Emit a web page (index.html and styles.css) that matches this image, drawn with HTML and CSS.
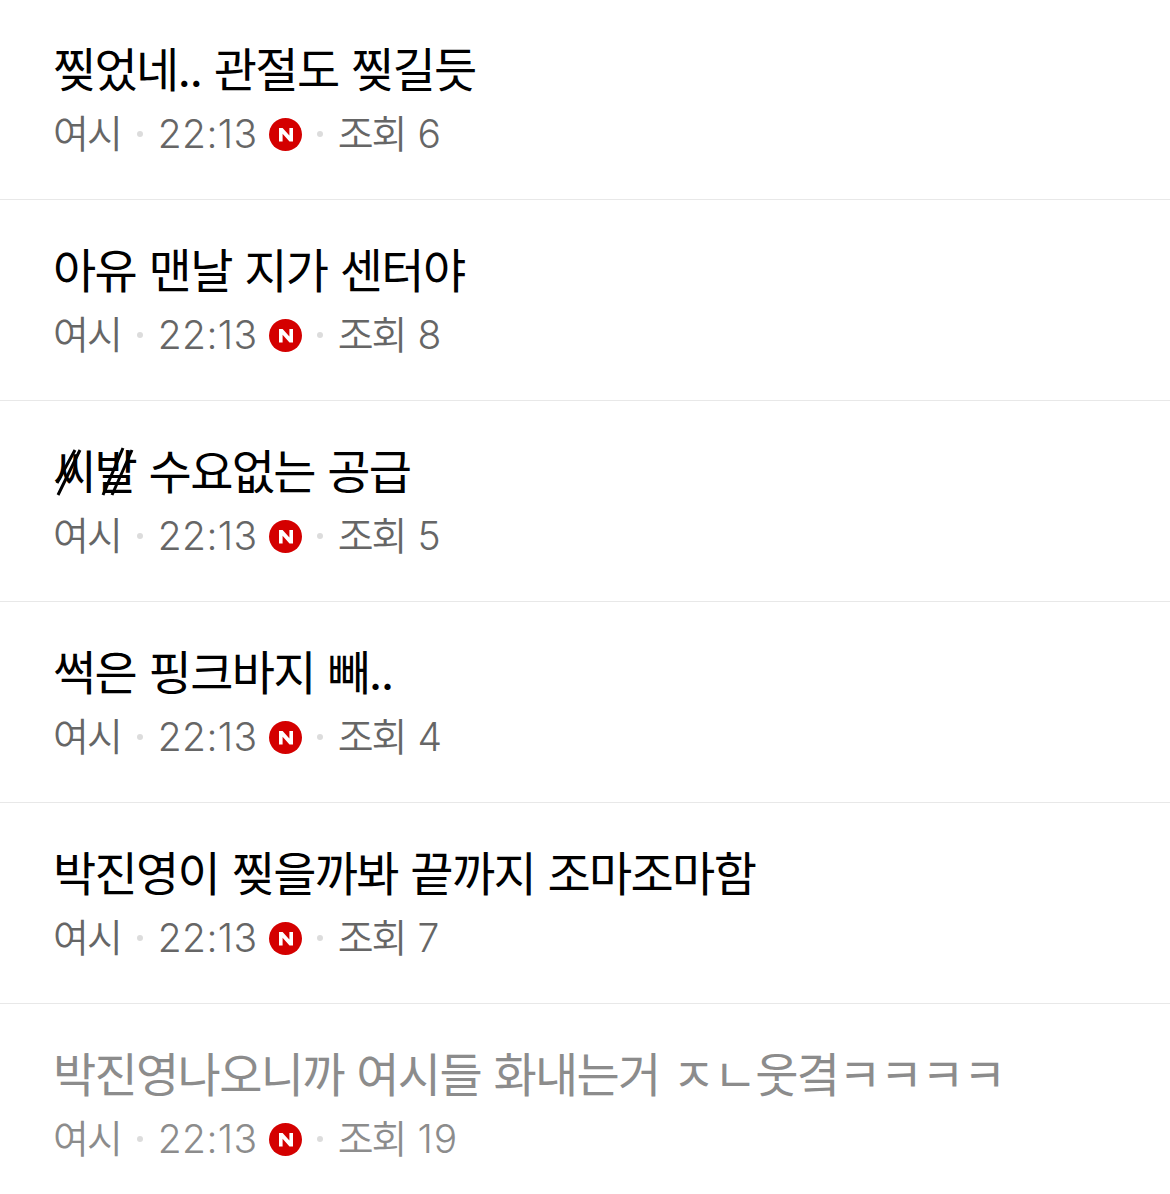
FILE: index.html
```html
<!DOCTYPE html>
<html lang="ko">
<head>
<meta charset="utf-8">
<title>목록</title>
<link rel="stylesheet" href="styles.css">
</head>
<body>
<ul class="list">
  <li class="row"><div class="title">찢었네.. 관절도 찢길듯</div><div class="meta"><span class="ko">여시</span><i class="dot"></i><span class="time">22:13</span><svg class="new" viewBox="0 0 33 33"><circle cx="16.5" cy="16.5" r="16.5" fill="#d40000"/><path d="M10 10h3.6l6.8 7.6V10H24v13.5h-3.5l-6.9-7.7v7.7H10z" fill="#fff"/></svg><i class="dot dot-after"></i><span class="views"><span class="ko">조회</span> 6</span></div></li>
  <li class="row"><div class="title">아유 맨날 지가 센터야</div><div class="meta"><span class="ko">여시</span><i class="dot"></i><span class="time">22:13</span><svg class="new" viewBox="0 0 33 33"><circle cx="16.5" cy="16.5" r="16.5" fill="#d40000"/><path d="M10 10h3.6l6.8 7.6V10H24v13.5h-3.5l-6.9-7.7v7.7H10z" fill="#fff"/></svg><i class="dot dot-after"></i><span class="views"><span class="ko">조회</span> 8</span></div></li>
  <li class="row"><div class="title"><span class="struck">씨발<svg class="slashes" viewBox="0 0 90 60"><path d="M4 43L22 10M5 55L27 10M50 55L70 8M59 55L79 10" fill="none" stroke="#000" stroke-width="3"/></svg></span> 수요없는 공급</div><div class="meta"><span class="ko">여시</span><i class="dot"></i><span class="time">22:13</span><svg class="new" viewBox="0 0 33 33"><circle cx="16.5" cy="16.5" r="16.5" fill="#d40000"/><path d="M10 10h3.6l6.8 7.6V10H24v13.5h-3.5l-6.9-7.7v7.7H10z" fill="#fff"/></svg><i class="dot dot-after"></i><span class="views"><span class="ko">조회</span> 5</span></div></li>
  <li class="row"><div class="title">썩은 핑크바지 빼..</div><div class="meta"><span class="ko">여시</span><i class="dot"></i><span class="time">22:13</span><svg class="new" viewBox="0 0 33 33"><circle cx="16.5" cy="16.5" r="16.5" fill="#d40000"/><path d="M10 10h3.6l6.8 7.6V10H24v13.5h-3.5l-6.9-7.7v7.7H10z" fill="#fff"/></svg><i class="dot dot-after"></i><span class="views"><span class="ko">조회</span> 4</span></div></li>
  <li class="row"><div class="title">박진영이 찢을까봐 끝까지 조마조마함</div><div class="meta"><span class="ko">여시</span><i class="dot"></i><span class="time">22:13</span><svg class="new" viewBox="0 0 33 33"><circle cx="16.5" cy="16.5" r="16.5" fill="#d40000"/><path d="M10 10h3.6l6.8 7.6V10H24v13.5h-3.5l-6.9-7.7v7.7H10z" fill="#fff"/></svg><i class="dot dot-after"></i><span class="views"><span class="ko">조회</span> 7</span></div></li>
  <li class="row read"><div class="title">박진영나오니까 여시들 화내는거 ㅈㄴ웃곀ㅋㅋㅋㅋ</div><div class="meta"><span class="ko">여시</span><i class="dot"></i><span class="time">22:13</span><svg class="new" viewBox="0 0 33 33"><circle cx="16.5" cy="16.5" r="16.5" fill="#d40000"/><path d="M10 10h3.6l6.8 7.6V10H24v13.5h-3.5l-6.9-7.7v7.7H10z" fill="#fff"/></svg><i class="dot dot-after"></i><span class="views"><span class="ko">조회</span> 19</span></div></li>
</ul>
</body>
</html>
```
FILE: styles.css
```css
* { box-sizing: border-box; }
html, body { margin: 0; padding: 0; background: #fff; }
body { font-family: Inter, "Noto Sans CJK KR", sans-serif; }
.list { list-style: none; margin: 0; padding: 0; }
.row { height: 201px; padding: 39px 53px 0; border-bottom: 1px solid #e8e8e8; }
.row:first-child { height: 200px; padding-top: 38px; }
.row:last-child { border-bottom: 0; }
.title { font-size: 47px; line-height: 64px; letter-spacing: -1.7px; word-spacing: 1px; color: #000; white-space: nowrap; }
.read .title { color: #8c8c8c; }
.struck { position: relative; display: inline-block; }
.slashes { position: absolute; left: 0; top: 0; width: 90px; height: 60px; }
.meta { display: flex; align-items: baseline; height: 62px; margin-top: 1px; font-size: 39px; line-height: 62px; font-weight: 350; color: #666; white-space: nowrap; }
.read .meta { color: #8c8c8c; }
.ko { letter-spacing: -2px; }
.time { letter-spacing: 0.4px; }
.views { white-space: pre; letter-spacing: 1px; }
.dot { align-self: center; width: 6px; height: 6px; border-radius: 50%; background: #dcdcdc; margin: 0 15px 0 16px; }
.dot-after { margin: 0 15px; }
.new { align-self: center; width: 33px; height: 33px; margin-left: 11px; }
```
